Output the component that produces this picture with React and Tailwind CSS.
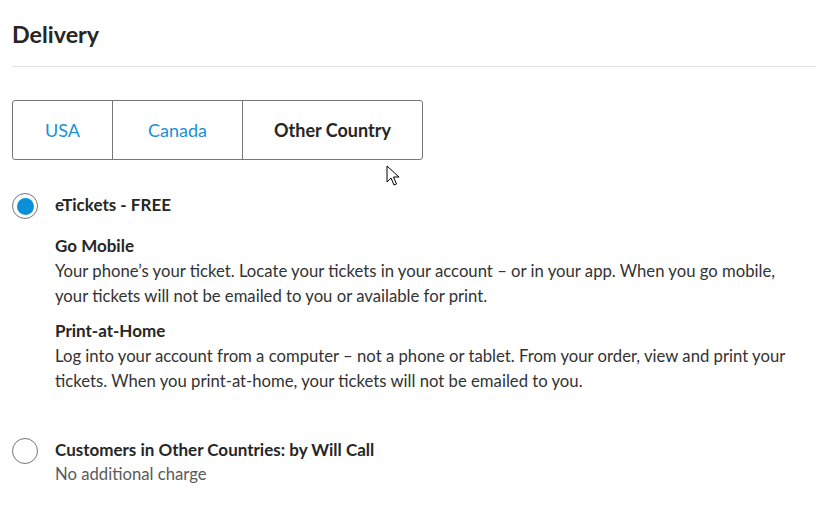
import React from "react";

export default function App() {
  return (
    <div className="w-[837px] h-[524px] bg-white overflow-hidden relative" style={{ fontFamily: "Lato, 'Open Sans', sans-serif" }}>
      <div className="pl-3 w-[816px]">
        <h2 className="pt-[20px] pb-[1px] text-[23.3px] leading-[28px] font-bold text-[#262626]">Delivery</h2>
        <div className="mt-[17px] border-t border-[#e2e2e2]" />
        <div className="mt-[33px] flex w-[411px] h-[60px] border border-[#777] rounded-[3px] text-[18px]">
          <div className="w-[99px] flex items-center justify-center text-[#1d8fd3]">USA</div>
          <div className="w-[130px] flex items-center justify-center border-l border-[#777] text-[#1d8fd3]">Canada</div>
          <div className="flex-1 flex items-center justify-center border-l border-[#777] font-bold text-[#262626]">Other Country</div>
        </div>
        <div className="mt-[33px] flex items-center gap-[17px] h-[26px]">
          <div className="w-[26px] h-[26px] rounded-full border border-[#777] flex items-center justify-center">
            <div className="w-[17px] h-[17px] rounded-full bg-[#0b8fd8]" />
          </div>
          <div className="text-[17px] font-bold text-[#262626] -mt-[2px]">eTickets - FREE</div>
        </div>
        <div className="pl-[43px] text-[16.7px] leading-[25px] text-[#333]">
          <div className="mt-[14px] font-bold text-[17px] text-[#262626]">Go Mobile</div>
          <p className="mt-[1px]">
            Your phone’s your ticket. Locate your tickets in your account – or in your app. When you go mobile,<br />
            your tickets will not be emailed to you or available for print.
          </p>
          <div className="mt-[9px] font-bold text-[17px] text-[#262626]">Print-at-Home</div>
          <p className="mt-[1px]">
            Log into your account from a computer – not a phone or tablet. From your order, view and print your<br />
            tickets. When you print-at-home, your tickets will not be emailed to you.
          </p>
        </div>
        <div className="mt-[43px] flex gap-[17px]">
          <div className="w-[26px] h-[26px] rounded-full border border-[#777] mt-[1px]" />
          <div className="text-[16.7px] leading-[25px]">
            <div className="font-bold text-[17px] text-[#262626]">Customers in Other Countries: by Will Call</div>
            <div className="text-[#5a5a5a]">No additional charge</div>
          </div>
        </div>
      </div>
      <svg className="absolute left-[386px] top-[165px]" width="14" height="22" viewBox="0 0 14 22">
        <path d="M1 1 L1 17 L5 13 L8 20 L10.5 19 L7.5 12 L13 12 Z" fill="#fff" stroke="#000" strokeWidth="1" strokeLinejoin="round" />
      </svg>
    </div>
  );
}
